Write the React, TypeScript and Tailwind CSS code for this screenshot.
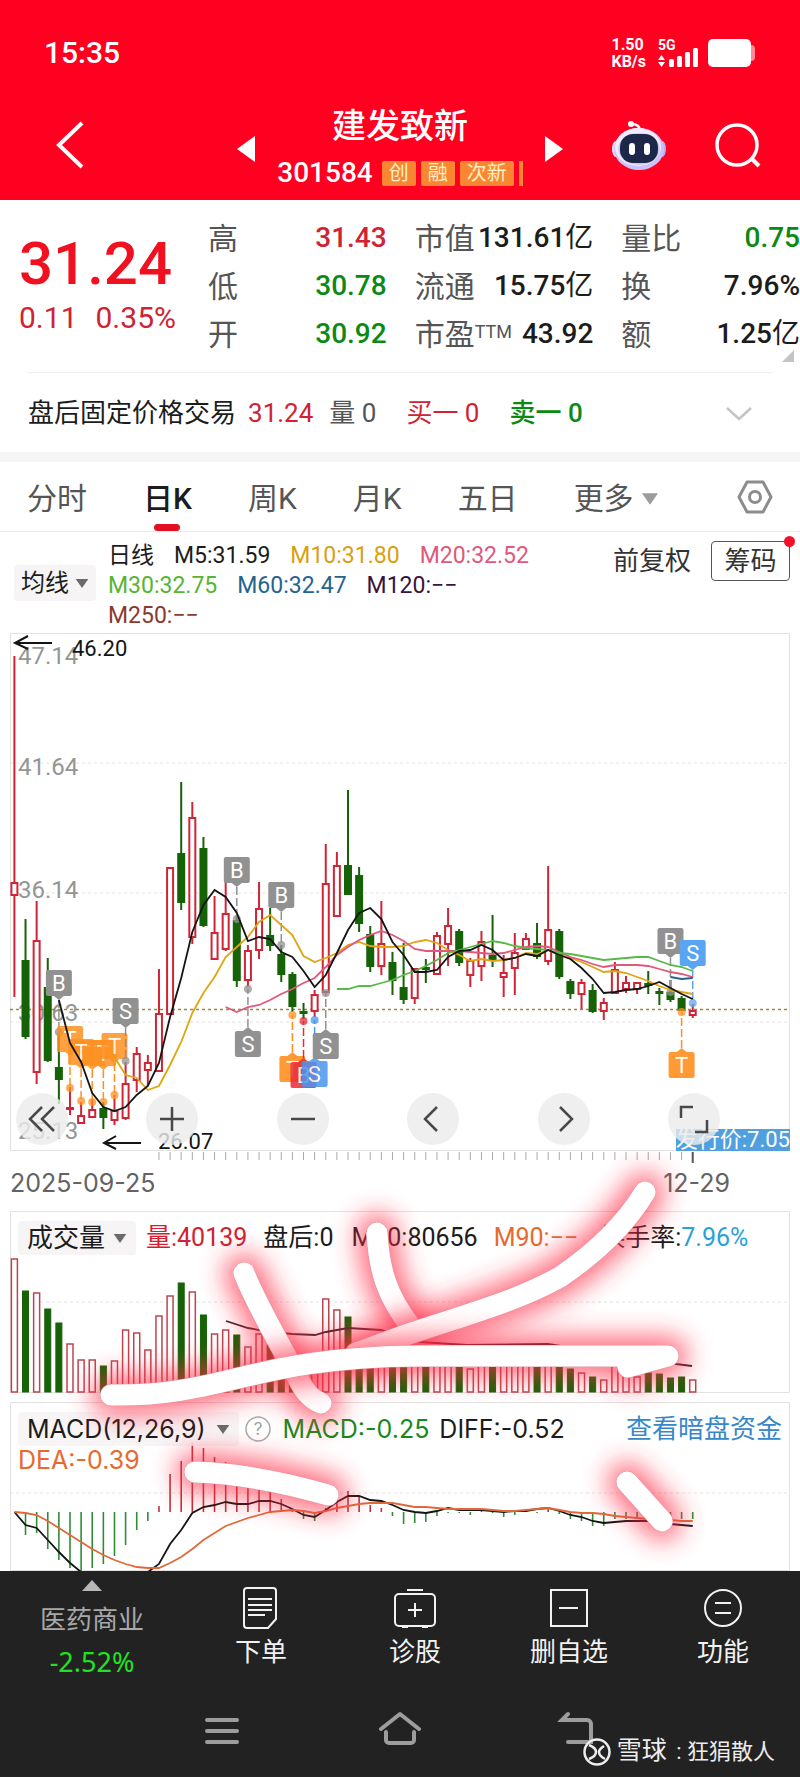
import { useState } from 'react';
import type { ReactNode } from 'react';

type Candle = [number, number, number, number, 'r' | 'g'];

const RED = '#cf2536';
const GREEN = '#166207';

// Horizontal position of the n-th trading day
const dayX = (i: number) => 14.4 + i * 11.12;

// high, body top, body bottom, low, colour
const candles: Candle[] = [
  [656, 882, 896, 997, 'r'], [919, 960, 1037, 1039, 'g'], [901, 940, 1073, 1084, 'r'], [958, 987, 1061, 1062, 'g'],
  [1032, 1067, 1080, 1104, 'g'], [1087, 1107, 1109, 1115, 'r'], [1102, 1115, 1124, 1124, 'r'], [1100, 1109, 1118, 1118, 'r'],
  [1102, 1108, 1118, 1129, 'g'], [1095, 1110, 1121, 1125, 'r'], [1062, 1083, 1119, 1120, 'r'], [1047, 1053, 1081, 1092, 'r'],
  [1055, 1062, 1071, 1086, 'r'], [969, 1013, 1072, 1072, 'r'], [867, 867, 1015, 1015, 'r'], [782, 853, 903, 910, 'g'],
  [802, 817, 938, 944, 'r'], [837, 848, 926, 927, 'g'], [896, 932, 960, 960, 'r'], [873, 913, 950, 951, 'r'],
  [915, 920, 981, 987, 'g'], [945, 950, 981, 987, 'r'], [882, 908, 951, 959, 'r'], [908, 935, 946, 951, 'g'],
  [945, 954, 975, 982, 'g'], [972, 974, 1007, 1012, 'g'], [1003, 1011, 1014, 1019, 'g'], [990, 994, 1012, 1017, 'r'],
  [844, 883, 993, 993, 'r'], [852, 865, 917, 917, 'r'], [790, 865, 895, 895, 'g'], [867, 875, 924, 932, 'g'],
  [926, 934, 967, 972, 'g'], [901, 943, 967, 975, 'r'], [952, 962, 981, 995, 'g'], [943, 987, 1000, 1004, 'g'],
  [968, 968, 999, 1004, 'r'], [959, 967, 969, 983, 'g'], [932, 935, 975, 975, 'r'], [908, 925, 945, 966, 'r'],
  [929, 931, 963, 966, 'g'], [958, 960, 976, 987, 'r'], [931, 941, 967, 981, 'r'], [915, 955, 960, 967, 'g'],
  [955, 972, 978, 997, 'r'], [933, 952, 969, 995, 'r'], [933, 938, 950, 950, 'r'], [923, 943, 957, 959, 'g'],
  [866, 929, 962, 965, 'r'], [929, 931, 977, 979, 'g'], [979, 981, 994, 999, 'g'], [979, 982, 995, 1009, 'r'],
  [984, 990, 1012, 1013, 'g'], [998, 1002, 1012, 1020, 'r'], [962, 969, 994, 994, 'r'], [976, 982, 990, 993, 'r'],
  [982, 982, 990, 994, 'r'], [971, 983, 986, 994, 'g'], [988, 991, 993, 1005, 'g'], [980, 992, 1000, 1002, 'g'],
  [996, 998, 1011, 1011, 'g'], [1004, 1010, 1016, 1018, 'r'],
];

const averages = [
  {
    color: '#e0a50f',
    from: 9,
    values: [1057, 1075, 1078, 1090, 1086, 1065, 1042, 1013, 993, 977, 957, 947, 937, 922, 915, 925, 935, 956, 962, 958, 953, 945, 942, 946, 947, 947, 946, 942, 940, 943, 950, 955, 961, 959, 961, 960, 958, 953, 954, 950, 955, 958, 962, 967, 972, 971, 973, 977, 981, 986, 990, 992, 994],
  },
  {
    color: '#e0587c',
    from: 19,
    values: [1007, 1012, 1007, 1005, 1000, 994, 989, 983, 978, 967, 955, 947, 940, 935, 931, 935, 941, 949, 951, 951, 951, 951, 952, 953, 954, 953, 950, 947, 946, 947, 952, 957, 960, 964, 967, 965, 965, 965, 966, 969, 972, 974, 977],
  },
  {
    color: '#57b947',
    from: 29,
    values: [989, 989, 986, 986, 983, 980, 975, 971, 966, 960, 953, 950, 947, 944, 941, 943, 946, 948, 949, 950, 953, 954, 956, 958, 960, 959, 958, 957, 957, 961, 965, 967, 971],
  },
  { color: '#24648f', from: 59, values: [977, 979, 978] },
  {
    color: '#141414',
    from: 4,
    values: [1000, 1043, 1062, 1093, 1107, 1111, 1107, 1095, 1086, 1063, 1017, 978, 932, 905, 890, 897, 913, 941, 937, 939, 952, 957, 971, 987, 975, 953, 930, 913, 908, 919, 942, 955, 972, 972, 970, 957, 951, 950, 945, 950, 960, 958, 954, 956, 950, 955, 959, 968, 979, 993, 992, 990, 989, 986, 982, 988, 994, 999],
  },
];

const volumeTops = [
  1258, 1290, 1292, 1308, 1322, 1343, 1359, 1359, 1365, 1360, 1329, 1332, 1349, 1315, 1295, 1282, 1291, 1314, 1333, 1329,
  1334, 1346, 1333, 1344, 1355, 1356, 1368, 1360, 1298, 1309, 1316, 1356, 1358, 1358, 1360, 1360, 1362, 1362, 1362, 1360,
  1362, 1368, 1364, 1362, 1364, 1364, 1362, 1362, 1358, 1362, 1368, 1372, 1376, 1379, 1364, 1374, 1376, 1372, 1373, 1377,
  1376, 1379,
];

const macdEnds = [
  1512, 1535, 1533, 1549, 1560, 1568, 1572, 1568, 1564, 1556, 1545, 1530, 1521, 1506, 1474, 1461, 1442, 1448, 1457, 1462,
  1468, 1475, 1480, 1490, 1499, 1510, 1519, 1521, 1508, 1497, 1491, 1496, 1505, 1508, 1516, 1524, 1523, 1522, 1516, 1513,
  1513, 1515, 1511, 1513, 1517, 1515, 1511, 1513, 1508, 1514, 1519, 1521, 1526, 1526, 1519, 1519, 1518, 1520, 1520, 1519,
  1519, 1519,
];

const diffLine = [
  1512, 1525, 1528, 1540, 1552, 1563, 1572, 1580, 1586, 1588, 1586, 1580, 1572, 1564, 1544, 1530, 1513, 1507, 1505, 1502,
  1504, 1504, 1501, 1501, 1504, 1509, 1515, 1517, 1510, 1502, 1496, 1496, 1500, 1501, 1505, 1510, 1512, 1513, 1511, 1508,
  1510, 1510, 1510, 1511, 1512, 1511, 1511, 1509, 1508, 1511, 1515, 1517, 1521, 1523, 1522, 1521, 1521, 1521, 1522, 1524,
  1525, 1526,
];

const deaLine = [
  1512, 1513, 1515, 1521, 1528, 1535, 1542, 1549, 1555, 1560, 1564, 1567, 1568, 1568, 1563, 1557, 1549, 1540, 1533, 1526,
  1522, 1518, 1515, 1512, 1511, 1510, 1511, 1513, 1511, 1508, 1506, 1504, 1503, 1503, 1503, 1505, 1507, 1507, 1508, 1509,
  1509, 1509, 1509, 1510, 1511, 1511, 1510, 1509, 1508, 1510, 1512, 1513, 1513, 1514, 1516, 1517, 1518, 1519, 1520, 1520,
  1521, 1521,
];

interface Mark {
  day: number;
  letter: string;
  top: number;
  dot: number;
  color: string;
  opacity?: number;
}

const GREY = '#919191';
const ORANGE = '#ff9020';
const marks: Mark[] = [
  { day: 4, letter: 'B', top: 970, dot: 1032, color: GREY },
  { day: 5, letter: 'T', top: 1026, dot: 1088, color: ORANGE, opacity: 0.85 },
  { day: 7, letter: 'T', top: 1040, dot: 1102, color: ORANGE, opacity: 0.85 },
  { day: 6, letter: 'T', top: 1039, dot: 1101, color: ORANGE, opacity: 0.85 },
  { day: 8, letter: 'T', top: 1040, dot: 1102, color: ORANGE, opacity: 0.85 },
  { day: 9, letter: 'T', top: 1033, dot: 1095, color: ORANGE, opacity: 0.85 },
  { day: 10, letter: 'S', top: 998, dot: 1061, color: GREY },
  { day: 20, letter: 'B', top: 857, dot: 919, color: GREY },
  { day: 21, letter: 'S', top: 1031, dot: 989, color: GREY },
  { day: 24, letter: 'B', top: 882, dot: 945, color: GREY },
  { day: 25, letter: 'T', top: 1056, dot: 1015, color: ORANGE, opacity: 0.9 },
  { day: 26, letter: 'B', top: 1062, dot: 1021, color: '#ea2a35', opacity: 0.85 },
  { day: 27, letter: 'S', top: 1061, dot: 1020, color: '#4a96ee', opacity: 0.85 },
  { day: 28, letter: 'S', top: 1033, dot: 993, color: GREY },
  { day: 59, letter: 'B', top: 928, dot: 992, color: GREY },
  { day: 60, letter: 'T', top: 1052, dot: 1012, color: ORANGE, opacity: 0.9 },
  { day: 61, letter: 'S', top: 940, dot: 1003, color: '#5aa5f2' },
];

const priceLabels = [
  { text: '47.14', y: 664 },
  { text: '41.64', y: 775 },
  { text: '36.14', y: 898 },
  { text: '30.63', y: 1021 },
  { text: '25.13', y: 1139 },
];

const quoteCells = [
  { label: '高', value: '31.43', tone: 'text-[#cf2233]' },
  { label: '市值', value: '131.61', unit: '亿', tone: 'text-[#1c1c1c]' },
  { label: '量比', value: '0.75', tone: 'text-[#0a8a12]' },
  { label: '低', value: '30.78', tone: 'text-[#0a8a12]' },
  { label: '流通', value: '15.75', unit: '亿', tone: 'text-[#1c1c1c]' },
  { label: '换', value: '7.96%', tone: 'text-[#1c1c1c]' },
  { label: '开', value: '30.92', tone: 'text-[#0a8a12]' },
  { label: '市盈', sup: 'TTM', value: '43.92', tone: 'text-[#1c1c1c]' },
  { label: '额', value: '1.25', unit: '亿', tone: 'text-[#1c1c1c]' },
];

const maLegend = [
  { text: '日线', tone: 'text-[#1c1c1c]' },
  { text: 'M5:31.59', tone: 'text-[#1c1c1c]' },
  { text: 'M10:31.80', tone: 'text-[#d9a010]' },
  { text: 'M20:32.52', tone: 'text-[#e0587c]' },
  { text: 'M30:32.75', tone: 'text-[#57b530]' },
  { text: 'M60:32.47', tone: 'text-[#24648f]' },
  { text: 'M120:−−', tone: 'text-[#3a1440]' },
  { text: 'M250:−−', tone: 'text-[#8a3a2e]' },
];

const tabs = ['分时', '日K', '周K', '月K', '五日'];

const linePoints = (values: number[], from = 0) =>
  values.map((y, i) => `${dayX(from + i)},${y}`).join(' ');

function Caret({ className }: { className: string }) {
  return (
    <svg viewBox="0 0 14 10" className={className} fill="currentColor">
      <path d="M0 0h14L7 10z" />
    </svg>
  );
}

function StatusBar() {
  return (
    <div className="flex h-24 items-start justify-between pt-[35px] pr-[45px] pl-11">
      <span className="text-[30px] leading-9 font-medium">15:35</span>
      <div className="flex h-9 items-center">
        <div className="mr-3 text-[16px] leading-[17px] font-bold">
          <div>1.50</div>
          <div>KB/s</div>
        </div>
        <svg viewBox="0 0 42 30" className="mr-2 h-[30px] w-[42px]" fill="#fff">
          <text x="0" y="12" fontSize="14" fontWeight="700">5G</text>
          <path d="M0 22l3.500-5 3.500 5zM0 24l3.500 5 3.500-5z" />
          <rect x="11" y="21" width="5" height="8" rx="1.500" />
          <rect x="19" y="18" width="5" height="11" rx="1.500" />
          <rect x="27" y="14" width="5" height="15" rx="1.500" />
          <rect x="35" y="10" width="5" height="19" rx="1.500" />
        </svg>
        <svg viewBox="0 0 47 28" className="h-7 w-[47px]">
          <rect x="35" y="6" width="12" height="16" rx="4" fill="#ff8a96" />
          <rect width="43" height="28" rx="5" fill="#fff" />
        </svg>
      </div>
    </div>
  );
}

function RobotIcon() {
  return (
    <svg viewBox="0 0 56 52" className="h-[52px] w-14">
      <path d="M29 12c0-5-3-7-9-7" fill="none" stroke="#fff" strokeWidth="2.500" />
      <circle cx="20" cy="5" r="3" fill="#fff" />
      <ellipse cx="5" cy="30" rx="4" ry="8" fill="#e6e0ff" />
      <ellipse cx="51" cy="30" rx="4" ry="8" fill="#b9aef0" />
      <ellipse cx="28" cy="30" rx="25" ry="21" fill="#cbc2fa" />
      <ellipse cx="27" cy="28" rx="23" ry="19" fill="#f0edff" />
      <ellipse cx="28" cy="30" rx="21" ry="16" fill="#cfcbee" />
      <rect x="9" y="15" width="38" height="29" rx="13" fill="#1d2748" />
      <rect x="18" y="24" width="6" height="12" rx="3" fill="#fff" />
      <rect x="33" y="24" width="6" height="12" rx="3" fill="#fff" />
    </svg>
  );
}

function TitleBar() {
  return (
    <div className="grid h-[104px] grid-cols-[1fr_auto_1fr] items-center">
      <button aria-label="返回" className="ml-[54px] w-8 pb-1.5">
        <svg viewBox="0 0 32 50" className="h-[50px] w-8" fill="none" stroke="#fff" strokeWidth="4">
          <path d="M28 3L5 25l23 22" />
        </svg>
      </button>
      <div className="flex w-[326px] items-center justify-between pt-0.5">
        <button aria-label="上一只">
          <svg viewBox="0 0 18 26" className="h-[26px] w-[18px]" fill="#fff"><path d="M18 0v26L0 13z" /></svg>
        </button>
        <div className="flex flex-col items-center">
          <h1 className="text-[34px] leading-12 font-medium">建发致新</h1>
          <div className="flex h-[46px] items-center gap-[5px]">
            <span className="mr-1 text-[28px] leading-8 font-medium">301584</span>
            <span className="rounded-xs bg-[#fb8632] px-[7px] text-[20px] leading-[25px] text-[#ffefc4]">创</span>
            <span className="rounded-xs bg-[#fb8632] px-[7px] text-[20px] leading-[25px] text-[#ffefc4]">融</span>
            <span className="rounded-xs bg-[#fb8632] px-[7px] text-[20px] leading-[25px] text-[#ffefc4]">次新</span>
            <span className="h-[25px] w-1 bg-[#fb8632]" />
          </div>
        </div>
        <button aria-label="下一只">
          <svg viewBox="0 0 18 26" className="h-[26px] w-[18px]" fill="#fff"><path d="M0 0v26L18 13z" /></svg>
        </button>
      </div>
      <div className="flex items-center justify-end gap-12 pr-[39px] pb-1.5">
        <button aria-label="智能助手"><RobotIcon /></button>
        <button aria-label="搜索">
          <svg viewBox="0 0 46 46" className="h-[46px] w-[46px]" fill="none" stroke="#fff" strokeWidth="3.500">
            <circle cx="22" cy="23" r="20" />
            <path d="M36 36l8 8" strokeWidth="4" />
          </svg>
        </button>
      </div>
    </div>
  );
}

function Quote() {
  return (
    <section className="relative grid grid-cols-[161px_1fr_1fr_1fr] gap-x-7 pt-[14px] pb-3.5 pl-[19px]">
      <div className="pt-5 text-[#cf2233]">
        <div className="text-[60px] leading-[60px] font-medium text-[#f0101f]">31.24</div>
        <div className="flex gap-[18px] text-[30px] leading-12">
          <span>0.11</span>
          <span>0.35%</span>
        </div>
      </div>
      <dl className="col-span-3 grid grid-cols-3 gap-x-7">
        {quoteCells.map((cell) => (
          <div key={cell.label} className="flex h-12 items-center justify-between whitespace-nowrap">
            <dt className="flex text-[30px] text-[#555]">
              {cell.label}
              {cell.sup && <sup className="top-0 mt-2 text-[18px] leading-6">{cell.sup}</sup>}
            </dt>
            <dd className={`text-[28px] font-medium ${cell.tone}`}>
              {cell.value}
              {cell.unit && <span className="text-[28px] font-normal">{cell.unit}</span>}
            </dd>
          </div>
        ))}
      </dl>
      <svg viewBox="0 0 12 12" className="absolute right-1.5 bottom-2.5 h-3 w-3" fill="#c4c4c4"><path d="M12 0v12H0z" /></svg>
    </section>
  );
}

function AfterHours() {
  return (
    <section className="mx-7 flex h-20 items-center border-t border-[#efefef] pt-0.5 text-[26px] text-[#1c1c1c]">
      <span>盘后固定价格交易</span>
      <span className="ml-3 text-[#cf2233]">31.24</span>
      <span className="ml-4 text-[#555]">量 0</span>
      <span className="ml-[30px] text-[#cf2233]">买一 0</span>
      <span className="ml-[30px] font-medium text-[#0a8a12]">卖一 0</span>
      <button aria-label="展开" className="mr-5 ml-auto">
        <svg viewBox="0 0 26 14" className="h-3.5 w-[26px]" fill="none" stroke="#c4c4c4" strokeWidth="2.500">
          <path d="M1 1l12 11L25 1" />
        </svg>
      </button>
    </section>
  );
}

function PeriodTabs() {
  const [active, setActive] = useState('日K');
  return (
    <nav className="flex h-[70px] items-center gap-14 border-b border-[#ececec] px-[27px] text-[30px]">
      {tabs.map((tab) => (
        <button
          key={tab}
          onClick={() => setActive(tab)}
          className={`relative h-full pt-1 ${tab === active ? 'font-medium text-[#1c1c1c]' : 'text-[#555]'}`}
        >
          {tab}
          {tab === active && <span className="absolute bottom-0 left-1/2 h-[7px] w-[26px] -translate-x-1/2 rounded-full bg-[#e3101f]" />}
        </button>
      ))}
      <button className="flex items-center gap-2 pt-1 text-[#555]">
        更多
        <Caret className="h-[14px] w-4 text-[#9c9c9c]" />
      </button>
      <button aria-label="设置" className="ml-auto">
        <svg viewBox="0 0 36 36" className="h-9 w-9" fill="none" stroke="#8c8c8c" strokeWidth="3">
          <path d="M10 3h16l8 15-8 15H10L2 18z" strokeLinejoin="round" />
          <circle cx="18" cy="18" r="5.500" />
        </svg>
      </button>
    </nav>
  );
}

function AverageLegend() {
  return (
    <section className="flex items-start gap-3 pt-[9px] pr-2.5 pb-0.5 pl-3.5">
      <button className="mt-6 flex h-9 shrink-0 items-center gap-1.5 rounded bg-[#f6f4f5] px-[7px] text-[24px] text-[#1c1c1c]">
        均线
        <Caret className="h-[9px] w-[14px] text-[#6b6b6b]" />
      </button>
      <div className="flex max-w-[440px] flex-wrap gap-x-5 text-[23px] leading-[30px]">
        {maLegend.map((item) => (
          <span key={item.text} className={item.tone}>{item.text}</span>
        ))}
      </div>
      <div className="ml-auto flex items-center gap-5 text-[26px] text-[#333]">
        <button>前复权</button>
        <button className="relative h-10 w-[79px] rounded border border-[#555] leading-9">
          筹码
          <span className="absolute -top-1.5 -right-1.5 h-[11px] w-[11px] rounded-full bg-[#f5102a]" />
        </button>
      </div>
    </section>
  );
}

function TradeMark({ day, letter, top, dot, color, opacity = 1 }: Mark) {
  const x = dayX(day);
  const below = top > dot;
  const edge = below ? top : top + 26;
  const tip = below ? top - 4 : top + 30;
  return (
    <g>
      <line x1={x} x2={x} y1={tip} y2={dot} stroke={color} strokeWidth="1.500" strokeDasharray="8 3" />
      <circle cx={x} cy={dot} r="4" fill={color} fillOpacity="0.75" />
      <g opacity={opacity}>
        <rect x={x - 13} y={top} width="26" height="26" rx="2" fill={color} />
        <path d={`M${x - 5} ${edge}L${x} ${tip}L${x + 5} ${edge}z`} fill={color} />
        <text x={x} y={top + 21} fontSize="22" fill="#fff" textAnchor="middle">{letter}</text>
      </g>
    </g>
  );
}

function CandleChart() {
  return (
    <svg viewBox="10 633 780 518" className="block w-full overflow-visible">
      {[763, 893, 1022].map((y) => (
        <line key={y} x1="10" x2="789" y1={y} y2={y} stroke="#e2e2e2" strokeDasharray="3 3" />
      ))}
      {priceLabels.map((label) => (
        <text key={label.text} x="18" y={label.y} fontSize="24" fill="#959595">{label.text}</text>
      ))}
      <line x1="10" x2="789" y1="1009.500" y2="1009.500" stroke="#a5853c" strokeWidth="1.500" strokeDasharray="3 3" />
      {candles.map(([high, top, bottom, low, tone], i) => {
        const x = dayX(i);
        const color = tone === 'r' ? RED : GREEN;
        return (
          <g key={i} stroke={color} strokeWidth="2">
            <path d={`M${x} ${high}V${top}M${x} ${bottom}V${low}`} />
            <rect x={x - 3} y={top + 1} width="6" height={Math.max(bottom - top - 2, 1)} fill={tone === 'r' ? '#fff' : color} />
          </g>
        );
      })}
      {marks.map((mark) => <TradeMark key={mark.day} {...mark} />)}
      {averages.map((line) => (
        <polyline key={line.color} points={linePoints(line.values, line.from)} fill="none" stroke={line.color} strokeWidth="1.800" />
      ))}
      <g fill="none" stroke="#141414" strokeWidth="2">
        <path d="M52 643H15M28 636L15 643l13 6" />
        <path d="M141 1143h-37M116 1136l-12 7 12 6" />
      </g>
      <text x="72" y="656" fontSize="22" fill="#141414">46.20</text>
      <text x="158" y="1149" fontSize="22" fill="#141414">26.07</text>
    </svg>
  );
}

const chartButtons: { label: string; icon: ReactNode }[] = [
  { label: '最左', icon: <path d="M26 14L14 26l12 12M38 14L26 26l12 12" /> },
  { label: '放大', icon: <path d="M26 14v24M14 26h24" /> },
  { label: '缩小', icon: <path d="M14 26h24" /> },
  { label: '左移', icon: <path d="M30 14L18 26l12 12" /> },
  { label: '右移', icon: <path d="M22 14l12 12-12 12" /> },
  { label: '全屏', icon: <path d="M13 25V14h12M39 27v12H27" /> },
];

function PricePanel() {
  return (
    <div className="relative ring-1 ring-[#e2e2e2] ring-inset">
      <CandleChart />
      <span className="absolute right-0 bottom-0 bg-[#509fdf] text-[22px] leading-[22px] text-white">发行价:7.05</span>
      <div className="absolute right-[70px] bottom-1.5 left-1.5 flex justify-between">
        {chartButtons.map((button) => (
          <button key={button.label} aria-label={button.label} className="h-[52px] w-[52px] rounded-full bg-[#ebebeb]/80">
            <svg viewBox="0 0 52 52" className="h-full w-full" fill="none" stroke="#484848" strokeWidth="2.500">{button.icon}</svg>
          </button>
        ))}
      </div>
    </div>
  );
}

function DateAxis() {
  return (
    <div className="h-[60px]">
      <svg viewBox="10 0 780 12" className="block w-full" stroke="#a9a9a9">
        {candles.map((_, i) => i > 12 && i < 61 && <path key={i} d={`M${dayX(i)} 1v8`} />)}
        <path d={`M${dayX(61)} 1v11`} stroke="#555" strokeWidth="2" />
      </svg>
      <div className="flex h-10 items-center justify-between pt-0.5 pr-[60px] font-['Inter',sans-serif] text-[25px] text-[#636363]">
        <time>2025-09-25</time>
        <time>12-29</time>
      </div>
    </div>
  );
}

function VolumePanel() {
  return (
    <div className="relative ring-1 ring-[#e2e2e2] ring-inset">
      <svg viewBox="10 1211 780 182" className="block w-full">
        <line x1="10" x2="789" y1="1302" y2="1302" stroke="#e2e2e2" strokeDasharray="3 3" />
        {volumeTops.map((y, i) => {
          const red = candles[i][4] === 'r';
          return (
            <rect
              key={i}
              x={dayX(i) - 3}
              y={y + 1}
              width="6"
              height={1391 - y}
              fill={red ? '#fff' : GREEN}
              stroke={red ? '#bd4450' : GREEN}
              strokeWidth={red ? 1.5 : 1}
            />
          );
        })}
        <path d="M226 1321L248 1328 270 1332 292 1334 315 1335 326 1332 348 1328 381 1330 420 1342 467 1345 548 1344 676 1364 692 1366" fill="none" stroke="#3a2428" strokeWidth="1.800" />
      </svg>
      <div className="absolute inset-x-2 top-[9px] flex h-9 items-center text-[25px] whitespace-nowrap text-[#1c1c1c]">
        <button className="mr-2.5 flex h-[34px] items-center gap-2 rounded bg-[#f6f4f5] px-[9px] text-[26px]">
          成交量
          <Caret className="h-[9px] w-[14px] text-[#6b6b6b]" />
        </button>
        <span className="mr-4 text-[#cf2233]">量:40139</span>
        <span className="mr-[18px]">盘后:0</span>
        <span className="mr-4">M20:80656</span>
        <span className="mr-[22px] text-[#e8692e]">M90:−−</span>
        <span>换手率:<span className="text-[#2b9fd8]">7.96%</span></span>
      </div>
    </div>
  );
}

function MacdPanel() {
  return (
    <div className="relative mt-[9px] ring-1 ring-[#e2e2e2] ring-inset">
      <svg viewBox="10 1402 780 169" className="block w-full">
        <line x1="10" x2="789" y1="1493" y2="1493" stroke="#e2e2e2" strokeDasharray="3 3" />
        {macdEnds.map((y, i) => (
          <line key={i} x1={dayX(i)} x2={dayX(i)} y1="1512" y2={y} stroke={y < 1512 ? '#c03038' : '#2f8c35'} strokeWidth="1.600" />
        ))}
        <polyline points={linePoints(diffLine)} fill="none" stroke="#141414" strokeWidth="1.800" />
        <polyline points={linePoints(deaLine)} fill="none" stroke="#e0693a" strokeWidth="1.800" />
      </svg>
      <div className="absolute inset-x-2 top-[9px] font-['Inter','Noto_Sans_CJK_SC',sans-serif] text-[25px] leading-[26px] whitespace-nowrap text-[#1c1c1c]">
        <div className="flex h-9 items-center">
          <button className="flex h-[34px] items-center gap-2.5 rounded bg-[#f6f4f5]/90 px-[9px]">
            MACD(12,26,9)
            <Caret className="h-[9px] w-[14px] text-[#6b6b6b]" />
          </button>
          <button aria-label="指标说明" className="mr-3 ml-1.5">
            <svg viewBox="0 0 26 26" className="h-[26px] w-[26px]">
              <circle cx="13" cy="13" r="12" fill="#fff" stroke="#a9a9a9" strokeWidth="1.500" />
              <text x="13" y="19" fontSize="17" textAnchor="middle" fill="#a0a0a0">?</text>
            </svg>
          </button>
          <span className="mr-2.5 text-[#168a1c]">MACD:-0.25</span>
          <span>DIFF:-0.52</span>
          <a href="#dark-pool" className="ml-auto text-[26px] text-[#3887c8]">查看暗盘资金</a>
        </div>
        <div className="text-[#e8692e]">DEA:-0.39</div>
      </div>
    </div>
  );
}

// Freehand marker strokes, each one glowing over those drawn before it
const strokes = [
  'M377 1233C379 1268 386 1296 412 1328',
  'M645 1192C628 1220 600 1250 560 1277C515 1302 465 1315 400 1337L356 1353',
  'M244 1273C258 1308 278 1340 300 1382Q308 1398 321 1403',
  'M111 1395C225 1397 250 1357 420 1356H668L628 1367',
  'M195 1472Q255 1474 328 1495',
  'M627 1482L662 1521',
];

function MarkerStrokes() {
  return (
    <svg viewBox="10 1151 780 420" className="pointer-events-none absolute inset-0 h-full w-full overflow-visible">
      <defs>
        <filter id="glow" filterUnits="userSpaceOnUse" x="0" y="1100" width="800" height="480">
          <feGaussianBlur stdDeviation="13" />
        </filter>
      </defs>
      <g fill="none" strokeLinecap="round" strokeLinejoin="round">
        {strokes.map((d) => (
          <g key={d}>
            <path d={d} stroke="#ff2a44" strokeWidth="40" opacity="0.68" filter="url(#glow)" />
            <path d={d} stroke="#df98a2" strokeWidth="22" />
            <path d={d} stroke="#fff" strokeWidth="21" />
          </g>
        ))}
      </g>
    </svg>
  );
}

const footerActions: { label: string; icon: ReactNode }[] = [
  {
    label: '下单',
    icon: (
      <>
        <path d="M7 1h26a3 3 0 013 3v28l-8 9H7a3 3 0 01-3-3V4a3 3 0 013-3z" />
        <path d="M8 12h24M8 18h24M8 23h24M8 28h17" />
      </>
    ),
  },
  {
    label: '诊股',
    icon: (
      <>
        <path d="M13 3h16M8 40h6M28 40h6" />
        <rect x="1" y="7" width="40" height="32" rx="4" />
        <path d="M21 16v14M14 23h14" />
      </>
    ),
  },
  { label: '删自选', icon: <path d="M3 3h36v36H3zM11 21h19" /> },
  {
    label: '功能',
    icon: (
      <>
        <circle cx="21" cy="21" r="18" />
        <path d="M13 16h16M13 26h16" />
      </>
    ),
  },
];

function Footer() {
  return (
    <footer className="bg-[#222]">
      <div className="grid h-[126px] grid-cols-[184px_1fr_1fr_1fr_1fr]">
        <button className="flex flex-col items-center pt-[9px]">
          <svg viewBox="0 0 20 11" className="h-[11px] w-5" fill="#b8b8b8"><path d="M10 0l10 11H0z" /></svg>
          <span className="mt-[11px] text-[26px] leading-9 text-[#a8a8a8]">医药商业</span>
          <span className="mt-1.5 font-['Noto_Sans',sans-serif] text-[27px] leading-9 text-[#1fe323]">-2.52%</span>
        </button>
        {footerActions.map((action) => (
          <button key={action.label} className="flex flex-col items-center pt-4 text-[26px] leading-[38px] text-[#f2f2f2]">
            <svg viewBox="0 0 42 42" className="mb-1 h-[42px] w-[42px]" fill="none" stroke="#f2f2f2" strokeWidth="2">{action.icon}</svg>
            {action.label}
          </button>
        ))}
      </div>
      <div className="relative flex h-20 items-start justify-between px-[201px] pt-3.5">
        <button aria-label="最近任务">
          <svg viewBox="0 0 42 42" className="h-[42px] w-[42px]" stroke="#9d9d9d" strokeWidth="4" strokeLinecap="round">
            <path d="M6 9h30M6 20h30M6 31h30" />
          </svg>
        </button>
        <button aria-label="主屏幕">
          <svg viewBox="0 0 42 42" className="h-[42px] w-[42px]" fill="none" stroke="#9d9d9d" strokeWidth="4" strokeLinecap="round" strokeLinejoin="round">
            <path d="M2 18L21 3l19 15M7 21v8a3 3 0 003 3h22a3 3 0 003-3v-8" />
          </svg>
        </button>
        <button aria-label="返回上级">
          <svg viewBox="0 0 42 42" className="h-[42px] w-[42px]" fill="none" stroke="#9d9d9d" strokeWidth="4" strokeLinecap="round">
            <path d="M11 3L5 9h25a4 4 0 014 4v18H11" />
          </svg>
        </button>
        <div className="absolute right-[25px] bottom-[7px] flex items-center gap-1.5 text-[#ededed]">
          <svg viewBox="0 0 28 28" className="h-7 w-7" fill="none" stroke="#ededed" strokeWidth="2.500">
            <circle cx="14" cy="14" r="12.500" />
            <path d="M6 7c5 2 7 4 7 7s-2 5-7 7M21 8c-3 2-5 4-5 6s2 5 6 7" />
          </svg>
          <span className="text-[22px] leading-9">
            <span className="mr-1 text-[25px]">雪球</span> : 狂狷散人
          </span>
        </div>
      </div>
    </footer>
  );
}

export default function App() {
  return (
    <div className="overflow-x-hidden bg-white font-['Roboto','Noto_Sans_CJK_SC',sans-serif]">
      <header className="bg-[#ff0020] text-white">
        <StatusBar />
        <TitleBar />
      </header>
      <Quote />
      <AfterHours />
      <div className="h-2.5 bg-[#f6f6f6]" />
      <PeriodTabs />
      <AverageLegend />
      <main className="mx-2.5">
        <PricePanel />
        <div className="relative">
          <DateAxis />
          <VolumePanel />
          <MacdPanel />
          <MarkerStrokes />
        </div>
      </main>
      <Footer />
    </div>
  );
}
